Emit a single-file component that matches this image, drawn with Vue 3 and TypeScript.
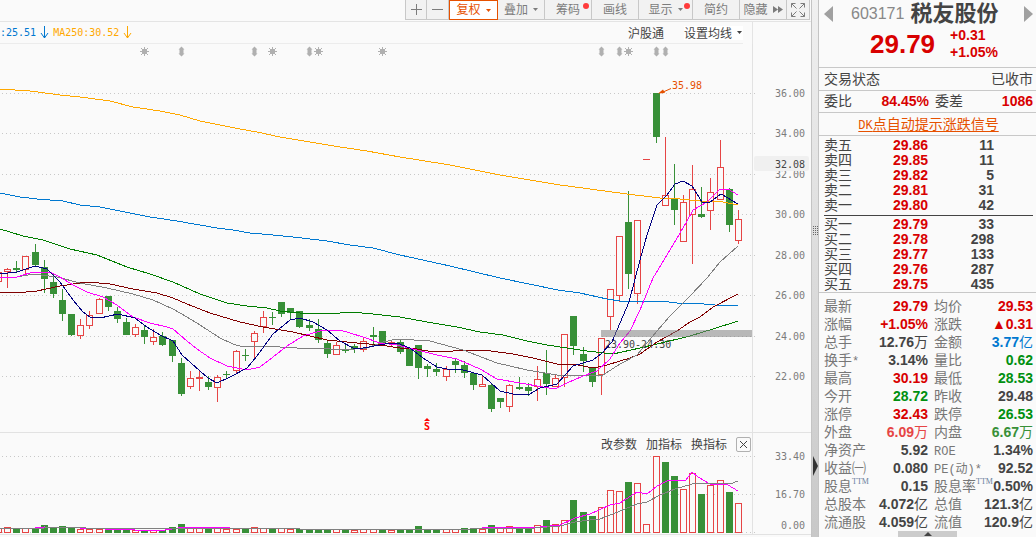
<script setup lang="ts">
type Tone = 'red' | 'green'
interface Candle { x: number; tone: Tone; top: number; bottom: number; high: number; low: number }
interface Tool { label: string; size: string; caret?: boolean; dot?: boolean; active?: boolean; forward?: boolean }
interface Stat { label: string; note?: string; latin?: string; value: string; unit?: string; tone: string }

const tools: Tool[] = [
  { label: '复权', size: 'w49', caret: true, active: true },
  { label: '叠加', size: 'w47', caret: true },
  { label: '筹码', size: 'w47', dot: true },
  { label: '画线', size: 'w47' },
  { label: '显示', size: 'w54', caret: true, dot: true },
  { label: '简约', size: 'w47' },
  { label: '隐藏', size: 'w47', forward: true },
]

// x, r/g, body top, body bottom, high, low
const rawCandles = `-2 r 272 282 272 282;7 r 269 272 268 288;16 g 268 270 261 272;25 r 256 270 256 274;35 g 252 265 244 266;44 g 267 279 260 293;53 g 282 294 273 298;62 g 300 314 289 321;71 g 314 335 314 336;80 r 325 336 319 339;89 r 315 326 311 329;99 r 299 314 298 314;108 g 296 307 296 311;117 g 311 319 307 323;126 g 322 335 318 335;135 r 327 335 324 337;144 g 330 337 326 344;153 r 337 342 329 345;162 g 336 345 332 346;172 g 340 356 340 362;181 g 363 394 358 396;190 r 378 387 371 389;199 r 377 379 371 391;208 g 382 387 376 390;217 r 377 388 375 402;226 g 374 375 371 379;236 r 351 371 350 373;245 g 355 356 349 361;254 r 333 342 331 358;263 r 317 327 311 333;272 g 317 318 312 325;281 g 302 314 302 317;290 g 308 313 308 320;299 g 311 327 311 328;309 g 325 328 319 331;318 g 329 340 319 343;327 g 343 354 341 358;336 r 345 355 342 355;345 g 349 351 344 353;354 g 346 349 344 353;363 r 341 350 338 352;373 g 335 337 327 344;382 g 331 343 331 343;391 r 342 344 341 346;400 g 342 352 340 354;409 g 348 366 348 366;418 g 345 368 345 379;427 g 366 369 364 377;436 g 369 372 363 376;446 r 369 377 366 381;455 g 361 365 359 373;464 g 365 373 361 378;473 g 373 385 373 390;482 r 384 387 376 387;491 g 385 409 383 412;500 g 398 402 398 408;509 r 385 407 384 412;519 g 387 389 377 390;528 g 387 391 383 396;537 r 379 387 366 401;546 g 373 384 350 395;555 r 378 387 374 387;564 r 334 378 334 387;573 g 316 346 316 355;583 g 354 361 347 372;592 g 367 382 367 387;601 r 338 375 338 395;610 r 289 317 289 330;619 r 236 296 236 302;628 g 222 274 191 289;637 r 220 294 220 304;646 r 159 160 159 160;656 g 93 137 93 143;665 r 195 206 137 206;674 g 198 210 164 225;683 r 202 242 195 242;692 r 189 215 165 264;701 g 214 217 187 218;710 r 192 211 178 230;720 r 167 200 140 200;729 g 189 225 188 232;738 r 219 241 210 244`
const candles: Candle[] = rawCandles.split(';').map((row) => {
  const [x, tone, top, bottom, high, low] = row.split(' ')
  return { x: +x, tone: tone === 'r' ? 'red' : 'green', top: +top, bottom: +bottom, high: +high, low: +low }
})

const rawVolumes = 'r528 r527 g529 r528 g528 g525 g528 g526 g527 r529 r529 r529 g529 g529 g529 r530 g530 r530 g530 g527 g524 r527 r527 g528 r528 r529 r529 g528 r527 r528 g528 r528 r529 g529 g529 g529 g529 r529 g529 r530 r529 r529 g529 r530 g530 g529 g526 g529 g529 r529 r529 g528 g528 r529 g525 r527 r526 g528 g528 r525 g520 r524 r520 g500 g512 g516 r507 r490 r491 g482 r483 r524 r456 g462 g476 r489 r473 g494 r485 r480 g492 r503'
const volumes = rawVolumes.split(' ').map((v, i) => ({
  x: candles[i].x, tone: (v[0] === 'r' ? 'red' : 'green') as Tone, top: +v.slice(1),
}))

const averages = [
  { id: 'ma250', points: '0,89 30,91 60,95 80,97 110,101 133,107 160,111 180,115 200,121 220,125 240,129 257,132 280,137 310,142 340,147 367,151 400,157 450,165 500,175 530,180 560,185 590,189 627,194 660,198 680,199 700,201 723,202 738,205' },
  { id: 'ma120', points: '0,193 20,197 37,199 63,201 80,205 100,207 130,213 150,217 177,221 217,228 233,230 250,233 273,235 293,237 327,241 350,245 373,248 400,255 450,266 500,278 558,290 580,293 607,299 620,301 660,301 677,303 693,303 715,305 738,306' },
  { id: 'ma60', points: '0,229 23,236 43,240 70,249 97,255 127,267 150,274 173,282 200,294 227,303 247,306 267,308 280,311 300,313 330,314 350,312 373,314 400,317 427,322 457,327 480,332 503,335 527,341 547,345 567,348 587,351 613,354 640,348 657,344 690,336 713,329 738,321' },
  { id: 'ma30', points: '0,292 15,293 37,291 60,286 87,282 110,284 133,289 157,293 173,298 187,304 210,313 240,322 263,327 293,332 327,340 357,343 380,345 400,348 417,349 433,352 453,351 483,350 513,354 533,358 557,364 573,364 593,368 607,365 630,358 640,354 657,342 677,331 690,322 700,317 713,307 738,294' },
  { id: 'ma20', points: '0,277 17,277 33,274 57,277 80,283 107,288 133,294 153,300 173,309 187,317 200,325 220,338 233,344 243,347 263,346 297,348 317,348 343,350 367,348 383,342 397,339 430,341 463,350 497,363 527,370 557,375 590,376 603,375 620,364 637,355 657,331 670,316 690,296 707,278 720,262 738,246' },
  { id: 'ma10', points: '0,277 17,277 33,272 50,272 60,277 73,285 87,292 103,297 117,305 133,317 150,323 167,327 173,329 187,341 197,349 210,358 227,366 247,370 260,367 273,357 287,346 303,336 320,331 340,330 363,337 380,343 397,345 417,350 437,355 457,359 480,369 497,379 520,383 543,387 555,389 567,383 583,376 597,371 610,359 620,343 630,331 640,310 653,278 673,245 687,221 693,210 707,202 720,189 728,189 738,195' },
  { id: 'ma5', points: '0,274 17,272 35,266 47,269 60,282 73,300 83,312 90,317 100,318 118,314 135,318 147,327 160,335 173,341 182,355 200,371 208,378 217,383 230,377 247,368 257,356 273,334 290,320 300,318 313,322 327,330 340,341 353,348 363,348 380,345 390,343 397,343 410,348 423,358 437,367 447,369 463,370 482,375 500,391 513,394 528,395 540,388 557,384 573,366 593,360 602,353 612,342 617,330 629,302 640,260 647,235 657,205 667,195 675,184 683,181 692,186 702,202 710,202 721,194 738,204' },
]

const priceTicks = [[93, '36.00'], [133, '34.00'], [174, '32.00'], [214, '30.00'], [255, '28.00'], [295, '26.00'], [336, '24.00'], [376, '22.00']] as const
const volumeTicks = [[456, 456, '33.40'], [494, 494, '16.70'], [532, 525, '0.00']] as const
const stars = [144, 272, 318, 382, 628]
const diamonds = [181, 254, 309, 601, 619, 656, 665]

const asks = [['卖五', '29.86', '11'], ['卖四', '29.85', '11'], ['卖三', '29.82', '5'], ['卖二', '29.81', '31'], ['卖一', '29.80', '42']]
const bids = [['买一', '29.79', '33'], ['买二', '29.78', '298'], ['买三', '29.77', '133'], ['买四', '29.76', '287'], ['买五', '29.75', '435']]

const stats: [Stat, Stat][] = [
  [{ label: '最新', value: '29.79', tone: 'up' }, { label: '均价', value: '29.53', tone: 'up' }],
  [{ label: '涨幅', value: '+1.05%', tone: 'up' }, { label: '涨跌', value: '▲0.31', tone: 'up' }],
  [{ label: '总手', value: '12.76', unit: '万', tone: 'flat' }, { label: '金额', value: '3.77', unit: '亿', tone: 'blue' }],
  [{ label: '换手', latin: '*', value: '3.14%', tone: 'flat' }, { label: '量比', value: '0.62', tone: 'down' }],
  [{ label: '最高', value: '30.19', tone: 'up' }, { label: '最低', value: '28.53', tone: 'down' }],
  [{ label: '今开', value: '28.72', tone: 'down' }, { label: '昨收', value: '29.48', tone: 'flat' }],
  [{ label: '涨停', value: '32.43', tone: 'up' }, { label: '跌停', value: '26.53', tone: 'down' }],
  [{ label: '外盘', value: '6.09', unit: '万', tone: 'soft-up' }, { label: '内盘', value: '6.67', unit: '万', tone: 'soft-down' }],
  [{ label: '净资产', value: '5.92', tone: 'flat' }, { label: '', latin: 'ROE', value: '1.34%', tone: 'flat' }],
  [{ label: '收益㈠', value: '0.080', tone: 'flat' }, { label: '', latin: 'PE(动)*', value: '92.52', tone: 'flat' }],
  [{ label: '股息', note: 'TTM', value: '0.15', tone: 'flat' }, { label: '股息率', note: 'TTM', value: '0.50%', tone: 'flat' }],
  [{ label: '总股本', value: '4.072', unit: '亿', tone: 'flat' }, { label: '总值', value: '121.3', unit: '亿', tone: 'flat' }],
  [{ label: '流通股', value: '4.059', unit: '亿', tone: 'flat' }, { label: '流值', value: '120.9', unit: '亿', tone: 'flat' }],
]
</script>

<template>
  <div class="terminal">
    <main class="chart">
      <nav class="toolbar">
        <button class="tool w22" type="button" aria-label="放大">
          <svg width="13" height="13"><path d="M6.500 1v11M1 6.500h11" class="stroke" /></svg>
        </button>
        <button class="tool w22" type="button" aria-label="缩小">
          <svg width="13" height="13"><path d="M1 6.500h11" class="stroke" /></svg>
        </button>
        <button v-for="t in tools" :key="t.label" type="button" class="tool" :class="[t.size, { active: t.active }]">
          <span>{{ t.label }}</span>
          <svg v-if="t.caret" width="5" height="3"><path d="M0 0h5L2.500 3z" class="solid" /></svg>
          <svg v-if="t.forward" width="10" height="7"><path d="M0 0l5 3.500L0 7zM5 0l5 3.500L5 7z" class="solid" /></svg>
          <i v-if="t.dot" class="dot"></i>
        </button>
        <button class="tool w24" type="button" aria-label="全屏">
          <svg width="14" height="14"><path d="M.500 4.500v-4h4M.500.500l5 5M9.500.500h4v4M13.500.500l-5 5M.500 9.500v4h4M.500 13.500l5-5M13.500 9.500v4h-4M13.500 13.500l-5-5" class="stroke" /></svg>
        </button>
      </nav>

      <div class="info">
        <div class="legend">
          <span class="blue">:25.51</span>
          <svg class="blue" width="9" height="13"><path d="M4.500 0v12M1 7l3.500 5L8 7" class="stroke" /></svg>
          <span class="orange">MA250:30.52</span>
          <svg class="orange" width="9" height="13"><path d="M4.500 0v12M1 7l3.500 5L8 7" class="stroke" /></svg>
          <button type="button" class="text-button connect">沪股通</button>
          <button type="button" class="text-button setting">设置均线
            <svg width="5" height="3"><path d="M0 0h5L2.500 3z" class="solid" /></svg>
          </button>
        </div>
      </div>

      <svg class="plot" viewBox="0 44 811 389" role="img" aria-label="K线图">
        <path d="M752.500 44v389M0 432.500h811" class="frame" />
        <g v-for="[y, label] in priceTicks" :key="label">
          <path :d="`M2 ${y}.5H755`" class="grid" />
          <text x="775" :y="y + 4" class="tick">{{ label }}</text>
        </g>
        <rect x="754" y="156" width="55" height="15" rx="2" class="cursor-box" />
        <text x="775" y="168" class="tick dark">32.08</text>

        <g v-for="x in stars" :key="`s${x}`" class="mark">
          <path :d="`M${x - 4} 51.500h9M${x}.5 47v9M${x - 3} 48l7 7M${x + 4} 48l-7 7`" />
          <rect :x="x - 2" y="49" width="5" height="5" />
        </g>
        <path v-for="x in diamonds" :key="`d${x}`" class="diamond" :d="`M${x}.5 46.500l3 3h-1v4h1l-3 3-3-3h1v-4h-1z`" />

        <g v-for="c in candles" :key="c.x" :class="c.tone">
          <template v-if="c.bottom - c.top < 3">
            <path :d="`M${c.x}.5 ${c.high}V${c.low}`" class="wick" />
            <rect :x="c.x - 3" :y="c.top" width="7" :height="c.bottom - c.top" class="solid" />
          </template>
          <template v-else>
            <path :d="`M${c.x}.5 ${c.high}V${c.top}M${c.x}.5 ${c.bottom}V${c.low}`" class="wick" />
            <rect v-if="c.tone === 'red'" :x="c.x - 3 + 0.5" :y="c.top + 0.5" width="6" :height="c.bottom - c.top - 1" class="wick" />
            <rect v-else :x="c.x - 3" :y="c.top" width="7" :height="c.bottom - c.top" class="solid" />
          </template>
        </g>
        <text x="605" y="348" class="tick dark">23.90-24.30</text>
        <polyline v-for="m in averages" :key="m.id" :points="m.points" class="average" :class="m.id" />
        <rect x="601" y="330" width="151" height="7" class="gap-band" />

        <path d="M671 88.500l-9 4" class="callout" />
        <path d="M658 93.500l5-4 2 3.500z" class="callout-tip" />
        <text x="672" y="89" class="tick callout-text">35.98</text>
        <path d="M427 418l3 3h-6z" class="signal" />
        <text x="424" y="430" class="signal signal-text">S</text>
      </svg>

      <div class="indicator-bar">
        <button type="button" class="text-button">改参数</button>
        <button type="button" class="text-button">加指标</button>
        <button type="button" class="text-button">换指标</button>
        <button type="button" class="close" aria-label="关闭">
          <svg width="9" height="9"><path d="M1 1l7 7M8 1L1 8" class="stroke" /></svg>
        </button>
      </div>

      <svg class="plot" viewBox="0 453 811 84" role="img" aria-label="成交量">
        <path d="M752.500 453v81M0 534.500h811" class="frame" />
        <g v-for="[y, ty, label] in volumeTicks" :key="label">
          <path :d="`M2 ${y}.5H755`" class="grid" />
          <text x="805" :y="ty + 4" class="tick end">{{ label }}</text>
        </g>
        <g v-for="v in volumes" :key="v.x" :class="v.tone">
          <rect v-if="v.tone === 'red'" :x="v.x - 3 + 0.5" :y="v.top + 0.5" width="6" :height="532 - v.top" class="wick" />
          <rect v-else :x="v.x - 3" :y="v.top" width="7" :height="533 - v.top" class="solid" />
        </g>
        <polyline class="average ma10" points="0,528 35,528 44,527 80,528 105,529 135,530 165,530 185,527 220,527 230,528 300,529 470,529 495,527 540,527 560,525 575,518 590,514 610,505 620,503 637,492 647,494 657,486 667,481 675,480 685,481 692,472 698,477 710,484 728,485 738,491" />
        <polyline class="average ma20" points="0,528 44,528 50,527 84,527 86,528 130,528 200,529 230,528 290,528 300,529 470,529 500,528 535,528 560,526 575,522 590,520 600,519 613,514 637,504 647,502 660,495 675,489 692,484 710,483 730,484 738,481" />
      </svg>
    </main>

    <div class="splitter">
      <svg class="grip" width="5" height="9"><path d="M.500 0v9M2.500 0v9M4.500 0v9" /></svg>
      <svg class="handle" width="5" height="20"><path d="M0 0l5 10L0 20z" /></svg>
    </div>

    <aside class="quote">
      <header class="head">
        <div class="title">
          <button type="button" class="arrow" aria-label="上一只"><svg width="9" height="16"><path d="M9 0v16L0 8z" /></svg></button>
          <span class="code">603171</span>
          <h1>税友股份</h1>
          <button type="button" class="arrow last" aria-label="下一只"><svg width="9" height="16"><path d="M0 0v16l9-8z" /></svg></button>
        </div>
        <div class="price">
          <strong>29.79</strong>
          <div class="change"><span>+0.31</span><span>+1.05%</span></div>
        </div>
      </header>
      <div class="line"><span>交易状态</span><span>已收市</span></div>
      <div class="line pair">
        <span>委比</span><b>84.45%</b><span>委差</span><b>1086</b>
      </div>
      <div class="line center"><a href="#"><span class="latin">DK</span>点自动提示涨跌信号</a></div>

      <table class="book asks"><tbody>
        <tr v-for="r in asks" :key="r[0]"><th scope="row">{{ r[0] }}</th><td class="up">{{ r[1] }}</td><td>{{ r[2] }}</td><td></td></tr>
      </tbody></table>
      <hr class="spread">
      <table class="book"><tbody>
        <tr v-for="r in bids" :key="r[0]"><th scope="row">{{ r[0] }}</th><td class="up">{{ r[1] }}</td><td>{{ r[2] }}</td><td></td></tr>
      </tbody></table>
      <hr class="rule">

      <table class="stats"><tbody>
        <tr v-for="(row, i) in stats" :key="i">
          <template v-for="s in row" :key="s.value">
            <th scope="row">{{ s.label }}<span v-if="s.latin" class="latin">{{ s.latin }}</span><sup v-if="s.note">{{ s.note }}</sup></th>
            <td :class="s.tone">{{ s.value }}<span v-if="s.unit" class="unit">{{ s.unit }}</span></td>
          </template>
        </tr>
      </tbody></table>
      <button type="button" class="expand" aria-label="展开"><svg width="8" height="4"><path d="M4 0l4 4H0z" /></svg></button>
    </aside>
  </div>
</template>

<style>
body { margin: 0; background: #fafafa; overflow: hidden; }
</style>

<style scoped>
.terminal { display: flex; min-height: 100vh; background: #fafafa; color: #444; font-family: "Liberation Sans", "Noto Sans CJK SC", sans-serif; font-size: 12px; }
button { margin: 0; padding: 0; border: 0; background: none; color: inherit; font: inherit; cursor: pointer; }
svg { display: block; flex: none; }
.stroke { fill: none; stroke: currentColor; stroke-width: 1; }
.solid { fill: currentColor; }
.chart { flex: 1; min-width: 0; }

.toolbar { display: flex; justify-content: flex-end; height: 21px; border-bottom: 1px solid #e4e4e4; padding-right: 1px; }
.tool { box-sizing: border-box; position: relative; display: flex; align-items: center; justify-content: center; gap: 5px; height: 20px; border: 1px solid #c8c8c8; border-top: 0; border-left-width: 0; background: #f2f2f2; color: #7c7c7c; line-height: 18px; }
.tool:first-child { border-left-width: 1px; }
.tool.active { border: 1px solid #e65100; border-top-width: 1px; background: #fff; color: #e65100; }
.w22 { width: 22px; }
.w24 { width: 23px; }
.w47 { width: 47px; }
.w49 { width: 49px; }
.w54 { width: 54px; }
.dot { position: absolute; top: 3px; right: 2px; width: 6px; height: 6px; border-radius: 50%; background: #ff3b3b; }

.info { height: 22px; box-sizing: border-box; padding-right: 68px; position: relative; }
.info::after { content: ""; position: absolute; top: 0; bottom: 0; right: 58px; border-right: 1px solid #e4e4e4; }
.legend { box-sizing: border-box; height: 22px; border-bottom: 1px solid #ececec; display: flex; align-items: center; gap: 4px; font-family: "DejaVu Sans Mono", "Noto Sans CJK SC", monospace; font-size: 10px; }
.blue { color: #0078d0; }
.orange { color: #ffa800; }
.text-button { font-family: "Noto Sans CJK SC", sans-serif; font-size: 12px; line-height: 14px; color: #444; display: flex; align-items: center; gap: 5px; }
.connect { margin-left: auto; margin-right: 16px; }
.setting { background: #fff; padding-right: 1px; }

.plot { width: 100%; height: auto; overflow: visible; }
.frame { fill: none; stroke: #e2e2e2; shape-rendering: crispEdges; }
.grid { fill: none; stroke: #c8c8c8; stroke-dasharray: 1 3; shape-rendering: crispEdges; }
.tick { font-family: "DejaVu Sans Mono", monospace; font-size: 10px; fill: #7c7c7c; }
.tick.dark { fill: #444; }
.tick.end { text-anchor: end; }
.cursor-box { fill: #f0f0f0; }
.mark path { stroke: #b0b0b0; fill: none; }
.mark rect, .diamond { fill: #b0b0b0; }
.red { color: #e64545; }
.green { color: #389038; }
.wick { stroke: currentColor; fill: none; shape-rendering: crispEdges; }
rect.wick { fill: #fafafa; }
rect.solid { shape-rendering: crispEdges; }
.average { fill: none; stroke-width: 1; shape-rendering: crispEdges; }
.ma250 { stroke: #ffa800; }
.ma120 { stroke: #0078d0; }
.ma60 { stroke: #007d00; }
.ma30 { stroke: #800000; }
.ma20 { stroke: #808080; }
.ma10 { stroke: #ff00ff; }
.ma5 { stroke: #000080; }
.gap-band { fill: #808080; fill-opacity: .54; }
.callout { stroke: #e65100; }
.callout-tip, .tick.callout-text { fill: #e65100; }
.signal { fill: #f00; }
.signal-text { font-family: "DejaVu Sans Mono", monospace; font-size: 10px; font-weight: 700; }

.indicator-bar { box-sizing: border-box; height: 20px; margin-right: 58px; border-right: 1px solid #e2e2e2; display: flex; justify-content: flex-end; align-items: center; gap: 9px; padding: 2px 1px 0 0; }
.close { width: 15px; height: 15px; box-sizing: border-box; border: 1px solid #b0b0b0; border-radius: 2px; display: flex; align-items: center; justify-content: center; }

.splitter { position: relative; box-sizing: border-box; flex: none; width: 8px; border-left: 1px solid #c4c4c4; border-right: 1px solid #c4c4c4; background: linear-gradient(#f0f0f0, #c8c8c8); }
.grip { position: absolute; left: 1px; top: 42%; }
.grip path { stroke: #666; stroke-dasharray: 1 1; }
.handle { position: absolute; left: 1px; top: 85%; }
.handle path { fill: #333; }

.quote { box-sizing: border-box; flex: none; width: 217px; font-size: 14px; display: flex; flex-direction: column; }
.head { height: 67px; box-sizing: border-box; }
.title { display: flex; align-items: center; height: 27px; padding: 0 3px 0 5px; }
.arrow svg { fill: #a0a0a0; }
.arrow.last { margin-left: auto; }
.code { margin-left: 18px; font-size: 16px; color: #888; }
h1 { margin: 0 0 0 6px; font-size: 22px; line-height: 26px; font-weight: 700; color: #444; }
.price { display: flex; align-items: center; color: #d80000; height: 34px; padding-left: 51px; gap: 15px; }
.price strong { font-size: 26px; line-height: 34px; }
.change { display: flex; flex-direction: column; font-weight: 700; line-height: 17px; }
.line { box-sizing: border-box; border-top: 1px solid #c8c8c8; height: 23px; line-height: 20px; padding: 0 3px 0 5px; display: flex; align-items: center; justify-content: space-between; }
.line.pair { display: grid; grid-template-columns: 40px 65px 40px 1fr; align-items: start; height: 22px; }
.line.center { justify-content: center; border-bottom: 1px solid #c8c8c8; height: 24px; }
.pair b { text-align: right; color: #d80000; font-weight: 700; }
.pair span:nth-child(3) { padding-left: 6px; }
a { color: #e65100; text-decoration: underline; text-underline-offset: 2px; line-height: 18px; }
.latin { font-family: "Liberation Mono", "Noto Sans CJK SC", monospace; font-size: 12px; line-height: 12px; }

table { border-collapse: collapse; table-layout: fixed; width: 100%; }
th, td { padding: 0; white-space: nowrap; text-align: right; font-weight: 700; }
th { text-align: left; font-weight: 400; padding-left: 5px; }
.book tr { height: 15px; }
.book th, .book td { line-height: 15px; height: 15px; }
.book th { width: 40px; }
.book td:nth-child(2) { width: 64px; }
.book td:nth-child(3) { width: 66px; }
.asks { margin-top: 2px; }
hr { border: 0; height: 1px; }
.spread { margin: 2px 3px 1px 5px; background: #444; }
.rule { margin: 0 0 4px; background: #c8c8c8; }
.stats th, .stats td { height: 18px; line-height: 16px; }
.stats th { color: #777; width: 52px; }
.stats td { width: 52px; }
.stats th:nth-child(3) { padding-left: 6px; width: 46px; }
.stats td:last-child { padding-right: 3px; width: 53px; }
.unit { font-weight: 400; }
sup { font-family: "Liberation Serif", serif; font-size: 8px; line-height: 8px; color: #68809c; vertical-align: top; }
.up { color: #d80000; }
.down { color: #009010; }
.flat { color: #444; }
.blue { color: #0078d0; }
.soft-up { color: #e64545; }
.soft-down { color: #389038; }
.expand { align-self: center; margin-top: auto; width: 59px; height: 6px; background: #ccc; display: flex; justify-content: center; align-items: center; }
.expand svg { fill: #444; }
</style>
